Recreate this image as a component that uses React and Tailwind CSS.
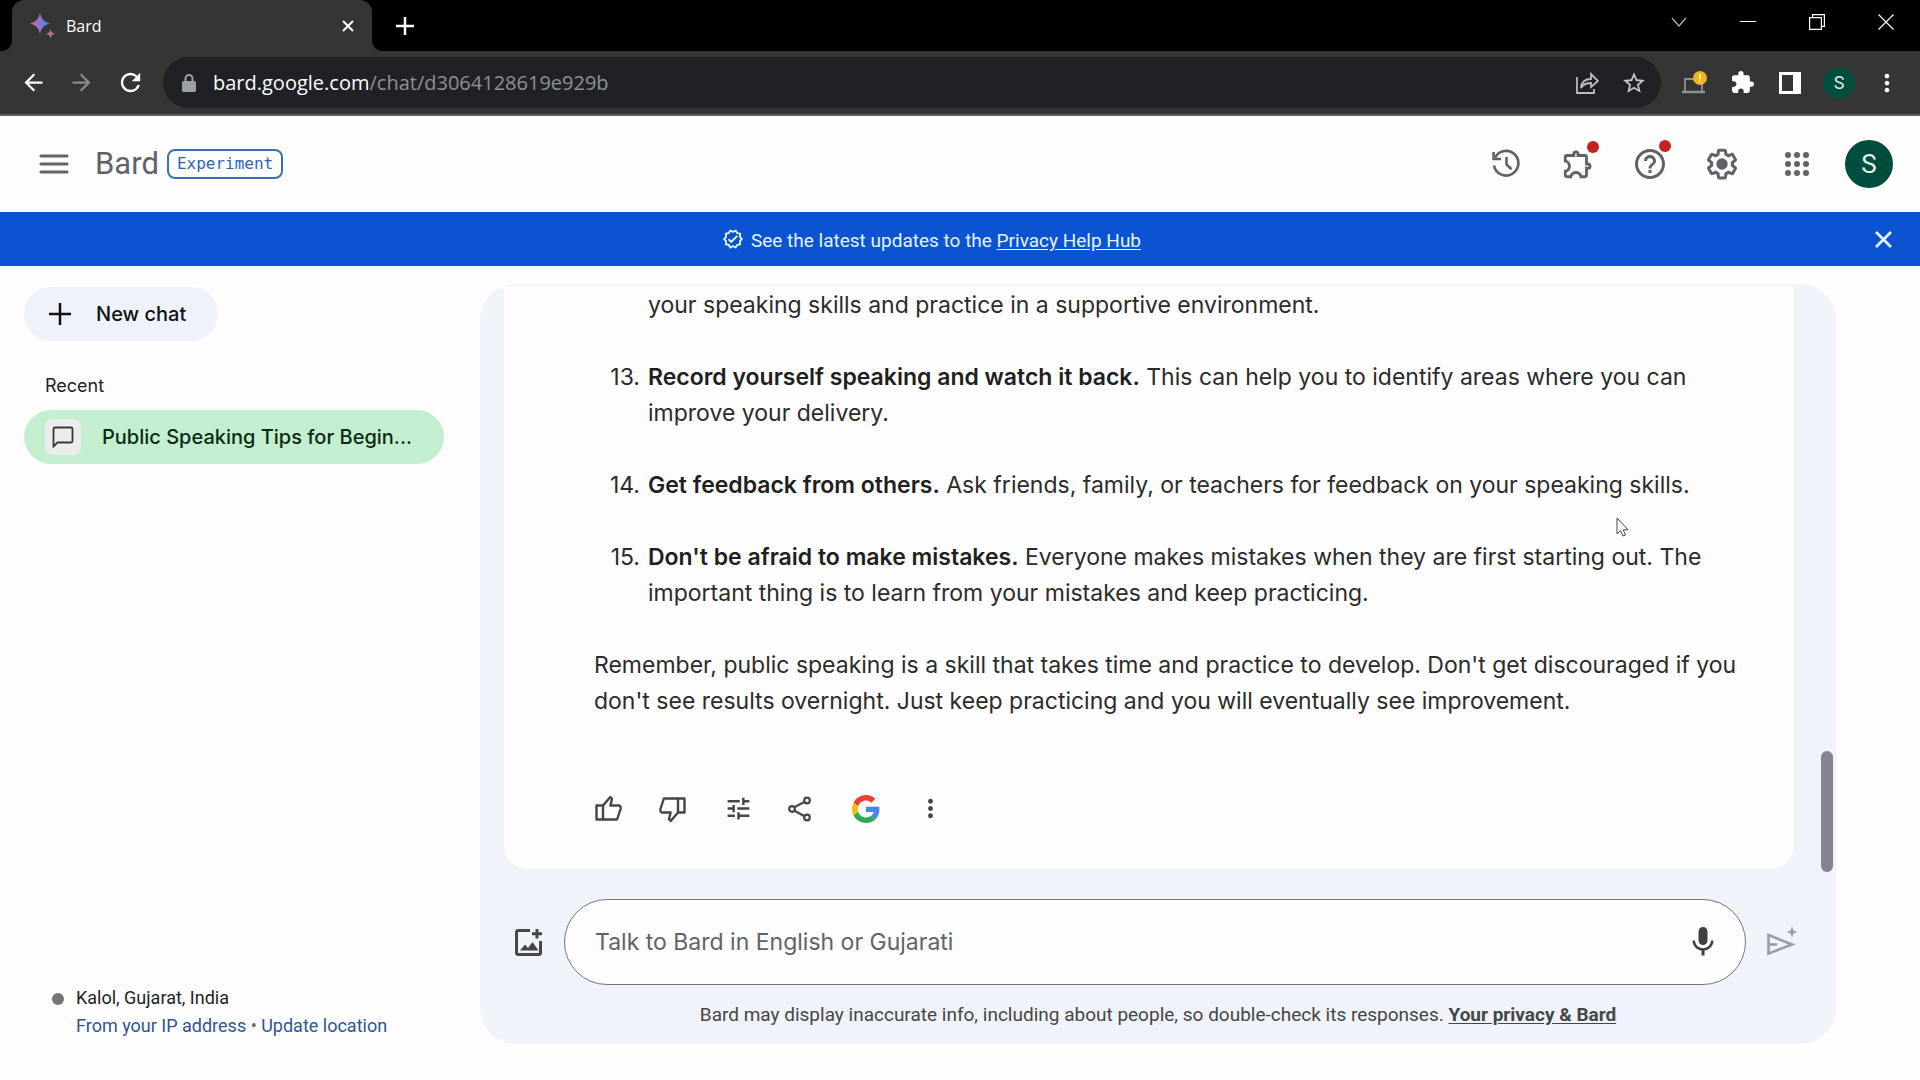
import {
  MdArrowBack,
  MdArrowForward,
  MdExtension,
  MdHelpOutline,
  MdMic,
  MdMoreVert,
  MdOutlineExtension,
  MdRefresh,
  MdStarBorder,
  MdTune,
} from "react-icons/md";

const tips = [
  {
    number: 13,
    title: "Record yourself speaking and watch it back.",
    text: "This can help you to identify areas where you can improve your delivery.",
  },
  {
    number: 14,
    title: "Get feedback from others.",
    text: "Ask friends, family, or teachers for feedback on your speaking skills.",
  },
  {
    number: 15,
    title: "Don't be afraid to make mistakes.",
    text: "Everyone makes mistakes when they are first starting out. The important thing is to learn from your mistakes and keep practicing.",
  },
];

function BardIcon() {
  return (
    <svg width="26" height="26" viewBox="0 0 26 26" aria-hidden="true">
      <defs>
        <linearGradient id="spark" x1="0" y1="0" x2="1" y2="0">
          <stop offset="0" stopColor="#d96570" />
          <stop offset="0.45" stopColor="#9b72cb" />
          <stop offset="1" stopColor="#1b90f0" />
        </linearGradient>
      </defs>
      <path
        fill="url(#spark)"
        d="M10 0c1.4 6 4 8.800 10 10.500-6 1.700-8.600 4.500-10 10.500C8.600 15 6 12.200 0 10.500 6 8.800 8.600 6 10 0Z"
      />
      <path
        fill="#b5708f"
        d="M20.500 16c.7 3 1.700 4 4.500 4.700-2.800.8-3.800 1.800-4.500 4.800-.7-3-1.700-4-4.500-4.800 2.800-.7 3.800-1.700 4.500-4.700Z"
      />
    </svg>
  );
}

function ThumbIcon({ className }) {
  return (
    <svg
      className={className}
      width="28"
      height="28"
      viewBox="0 0 28 28"
      fill="none"
      stroke="currentColor"
      strokeWidth="2.400"
      strokeLinejoin="round"
      aria-hidden="true"
    >
      <path d="M2.500 10.500H9v14H2.500z" />
      <path d="M9 10.500l7.300-8.500 1.700 1.800-1.600 6.700h8.800q1.800.5 1.500 3l-3.600 11H9" />
    </svg>
  );
}

function GoogleIcon() {
  return (
    <svg width="28" height="28" viewBox="0 0 48 48" aria-hidden="true">
      <path fill="#EA4335" d="M24 9.500c3.540 0 6.710 1.220 9.210 3.600l6.850-6.850C35.900 2.380 30.470 0 24 0 14.620 0 6.510 5.380 2.560 13.220l7.980 6.190C12.430 13.720 17.740 9.500 24 9.500z" />
      <path fill="#4285F4" d="M46.980 24.550c0-1.570-.15-3.090-.38-4.550H24v9.020h12.940c-.58 2.960-2.260 5.480-4.780 7.180l7.730 6c4.510-4.180 7.090-10.360 7.090-17.650z" />
      <path fill="#FBBC05" d="M10.530 28.590c-.48-1.450-.76-2.990-.76-4.590s.27-3.140.76-4.590l-7.980-6.190C.92 16.460 0 20.120 0 24c0 3.880.92 7.540 2.560 10.780l7.970-6.190z" />
      <path fill="#34A853" d="M24 48c6.480 0 11.930-2.130 15.890-5.810l-7.730-6c-2.150 1.450-4.920 2.300-8.160 2.300-6.260 0-11.570-4.220-13.470-9.910l-7.980 6.190C6.510 42.620 14.620 48 24 48z" />
    </svg>
  );
}

function AppsIcon() {
  return (
    <svg width="24" height="24" viewBox="0 0 24 24" fill="currentColor" aria-hidden="true">
      {[3, 12, 21].map((y) =>
        [3, 12, 21].map((x) => <circle key={`${x}-${y}`} cx={x} cy={y} r="3" />)
      )}
    </svg>
  );
}

function TitleBar() {
  return (
    <div className="flex h-[51px] items-stretch justify-between bg-black pl-3 text-white">
      <div className="flex items-center">
        <div className="relative flex h-full w-[360px] items-center justify-between rounded-t-xl bg-[#353535] pr-[14px] pl-[18px]">
          <div className="flex items-center gap-[10px]">
            <BardIcon />
            <span className="font-['Open_Sans',sans-serif] text-base">Bard</span>
          </div>
          <button aria-label="Close tab" className="p-1">
            <svg width="12" height="12" viewBox="0 0 12 12" stroke="currentColor" strokeWidth="2">
              <path d="M1 1l10 10M11 1L1 11" />
            </svg>
          </button>
          <svg className="absolute bottom-0 left-full" width="10" height="10" viewBox="0 0 10 10">
            <path fill="#353535" d="M0 0v10h10A10 10 0 0 1 0 0Z" />
          </svg>
          <svg className="absolute right-full bottom-0" width="10" height="10" viewBox="0 0 10 10">
            <path fill="#353535" d="M10 0v10H0A10 10 0 0 0 10 0Z" />
          </svg>
        </div>
        <button aria-label="New tab" className="ml-6">
          <svg width="18" height="18" viewBox="0 0 18 18" stroke="currentColor" strokeWidth="2.500">
            <path d="M9 0v18M0 9h18" />
          </svg>
        </button>
      </div>

      <div className="flex h-11 items-center">
        <button aria-label="Search tabs" className="flex w-[68px] justify-center">
          <svg width="16" height="10" viewBox="0 0 16 10" fill="none" stroke="#b4b4b4" strokeWidth="1.200">
            <path d="M1 1l7 8 7-8" />
          </svg>
        </button>
        <button aria-label="Minimize" className="flex w-[69px] justify-center">
          <svg width="16" height="16" viewBox="0 0 16 16" fill="none" stroke="currentColor">
            <path d="M0 7.500h16" />
          </svg>
        </button>
        <button aria-label="Restore" className="flex w-[69px] justify-center">
          <svg width="16" height="16" viewBox="0 0 16 16" fill="none" stroke="currentColor" strokeWidth="1.200">
            <path d="M.6 3.600h11.800v11.800H.6zM3.600 3.600V.6h11.800v11.800h-3" />
          </svg>
        </button>
        <button aria-label="Close window" className="flex w-[69px] justify-center">
          <svg width="16" height="16" viewBox="0 0 16 16" fill="none" stroke="currentColor" strokeWidth="1.200">
            <path d="M.5.5l15 15M15.500.5l-15 15" />
          </svg>
        </button>
      </div>
    </div>
  );
}

function Toolbar() {
  return (
    <div className="flex h-[65px] items-center border-b-2 border-[#5f5f5f] bg-[#353535] pr-[19px] pl-5 text-white">
      <div className="flex items-center gap-[21px]">
        <button aria-label="Back">
          <MdArrowBack size={27} />
        </button>
        <button aria-label="Forward" className="text-[#8a8a8a]">
          <MdArrowForward size={27} />
        </button>
        <button aria-label="Reload">
          <MdRefresh size={29} />
        </button>
      </div>

      <div className="ml-[18px] flex h-[51px] flex-1 items-center rounded-full bg-[#202124] pr-[14px] pl-[19px]">
        <svg width="14" height="18" viewBox="0 0 14 18" aria-hidden="true">
          <path d="M3.500 8V4.500a3.500 3.500 0 0 1 7 0V8" fill="none" stroke="#9aa0a6" strokeWidth="2" />
          <rect y="7" width="14" height="11" rx="1.500" fill="#9aa0a6" />
        </svg>
        <div
          role="textbox"
          aria-label="Address"
          className="ml-[17px] flex-1 font-['Open_Sans',sans-serif] text-xl text-[#8e9196]"
        >
          <span className="text-white">bard.google.com</span>/chat/d3064128619e929b
        </div>
        <button aria-label="Share this page" className="mr-[22px] text-[#b8bbbf]">
          <svg width="24" height="24" viewBox="0 0 24 24" fill="none" stroke="currentColor" strokeWidth="1.800">
            <path d="M2 6v16h17v-4" />
            <path d="M6 17c.5-6 4-9 10-9V3l7 7-7 6v-4c-5 0-8 1.500-10 5Z" />
          </svg>
        </button>
        <button aria-label="Bookmark" className="text-[#c4c7ca]">
          <MdStarBorder size={26} />
        </button>
      </div>

      <div className="ml-[19px] flex items-center">
        <button aria-label="Device status" className="flex w-[28px] justify-center">
          <svg width="28" height="26" viewBox="0 0 28 26">
            <path d="M5 21V9h17v12" fill="none" stroke="#8f8f8f" strokeWidth="1.800" />
            <path d="M2 22h23" stroke="#8f8f8f" strokeWidth="2.500" />
            <circle cx="20" cy="8" r="7" fill="#f2b41c" />
            <path d="M20 4v5M20 10.500v2" stroke="#fff3c4" strokeWidth="2" />
          </svg>
        </button>
        <button aria-label="Extensions" className="ml-5 flex w-[28px] justify-center">
          <MdExtension size={25} />
        </button>
        <button aria-label="Side panel" className="ml-[20px] flex w-[28px] justify-center">
          <svg width="22" height="22" viewBox="0 0 22 22">
            <path fillRule="evenodd" fill="currentColor" d="M0 0h22v22H0zM3 3v16h11V3z" />
          </svg>
        </button>
        <button
          aria-label="Profile"
          className="ml-[19px] flex size-8 items-center justify-center rounded-full bg-[#004d3d] font-['Roboto',sans-serif] text-lg text-[#d4efe6]"
        >
          S
        </button>
        <button aria-label="Browser menu" className="ml-[18px]">
          <MdMoreVert size={28} />
        </button>
      </div>
    </div>
  );
}

function Header() {
  return (
    <header className="flex h-24 items-center justify-between pr-[27px] pl-[38px] text-[#5f6368]">
      <div className="flex items-center">
        <button aria-label="Main menu">
          <svg width="32" height="32" viewBox="0 0 32 32" stroke="currentColor" strokeWidth="3" strokeLinecap="round">
            <path d="M3 8h26M3 16h26M3 24h26" />
          </svg>
        </button>
        <span className="ml-[25px] font-['Roboto',sans-serif] text-[31px]">Bard</span>
        <span className="ml-2 rounded-lg border-2 border-[#3d6fb5] px-2 font-['DejaVu_Sans_Mono',monospace] text-base leading-[26px] text-[#2f66b5]">
          Experiment
        </span>
      </div>

      <div className="flex items-center">
        <button aria-label="Activity" className="flex w-[72px] justify-center">
          <svg width="30" height="30" viewBox="0 0 30 30" fill="none" stroke="currentColor" strokeWidth="2.600">
            <path d="M4.200 8.500A12.300 12.300 0 1 1 3 16.500" />
            <path d="M2.600 3v7h7.400" />
            <path d="M15.500 8v7.500l5 4.800" />
          </svg>
        </button>
        <button aria-label="Extensions" className="relative flex w-[72px] justify-center">
          <MdOutlineExtension size={34} />
          <span className="absolute -top-1.5 right-[15px] size-3 rounded-full bg-[#c5221f]" />
        </button>
        <button aria-label="Help" className="relative flex w-[72px] justify-center">
          <MdHelpOutline size={36} />
          <span className="absolute -top-1.5 right-[15px] size-3 rounded-full bg-[#c5221f]" />
        </button>
        <button aria-label="Settings" className="flex w-[72px] justify-center">
          <svg width="36" height="36" viewBox="0 0 24 24" fill="currentColor">
            <path d="M13.850 22.250h-3.700c-.74 0-1.360-.54-1.450-1.270l-.27-1.890c-.27-.14-.53-.29-.79-.46l-1.800.72c-.7.26-1.470-.03-1.810-.65L2.200 15.530c-.35-.66-.2-1.440.36-1.880l1.530-1.190c-.01-.15-.02-.3-.02-.46 0-.15.010-.31.020-.46l-1.520-1.190c-.59-.45-.74-1.260-.37-1.880l1.850-3.190c.34-.62 1.110-.9 1.790-.63l1.810.73c.26-.17.520-.32.780-.46l.27-1.910c.09-.7.710-1.250 1.440-1.250h3.700c.74 0 1.360.54 1.450 1.270l.27 1.890c.27.14.530.29.790.46l1.800-.72c.71-.26 1.480.030 1.820.65l1.840 3.180c.36.66.2 1.440-.36 1.880l-1.520 1.190c.01.15.020.3.020.460s-.01.310-.02.460l1.520 1.190c.56.450.720 1.230.370 1.860l-1.860 3.220c-.34.620-1.110.9-1.800.63l-1.800-.72c-.26.170-.52.320-.78.460l-.27 1.910c-.1.680-.72 1.220-1.460 1.220zm-3.230-2h2.760l.37-2.550.53-.22c.44-.18.880-.44 1.340-.78l.45-.34 2.380.96 1.380-2.400-2.030-1.580.07-.56c.03-.26.060-.51.060-.78s-.03-.53-.06-.78l-.07-.56 2.030-1.580-1.390-2.400-2.390.96-.45-.35c-.42-.32-.87-.58-1.330-.77l-.52-.22-.37-2.550h-2.760l-.37 2.550-.53.210c-.44.190-.88.440-1.340.79l-.45.330-2.380-.95-1.390 2.390 2.030 1.580-.07.560a7 7 0 0 0-.06.790c0 .26.020.53.060.78l.07.560-2.030 1.580 1.380 2.400 2.390-.96.450.350c.43.330.860.580 1.330.77l.53.220z" />
            <circle cx="12" cy="12" r="3.800" />
          </svg>
        </button>
        <button aria-label="Google apps" className="ml-[21px] flex w-9 justify-center">
          <AppsIcon />
        </button>
        <button
          aria-label="Account"
          className="ml-[30px] flex size-12 items-center justify-center rounded-full bg-[#004d3d] font-['Roboto',sans-serif] text-[26px] text-[#e3f5ef]"
        >
          S
        </button>
      </div>
    </header>
  );
}

function Banner() {
  return (
    <div className="flex h-[54px] items-center bg-[#0b53d0] pr-6 text-[#e3f4ff]">
      <p className="flex flex-1 items-center justify-center gap-[7px] pt-1 pr-2 font-['Roboto',sans-serif] text-[19px] leading-6">
        <svg className="mb-1" width="22" height="22" viewBox="0 0 24 24" fill="currentColor">
          <path d="M23 11.990l-2.440-2.790.34-3.690-3.610-.82L15.400 1.500 12 2.960 8.600 1.500 6.710 4.690 3.100 5.500l.34 3.700L1 11.990l2.440 2.790-.34 3.700 3.610.82L8.600 22.500l3.400-1.470 3.400 1.460 1.890-3.190 3.610-.82-.34-3.690 2.440-2.800zm-3.950 1.480l-.56.650.08.850.18 1.950-1.900.43-.84.190-.44.740-.99 1.680-1.780-.77-.8-.34-.79.340-1.780.77-.99-1.670-.44-.74-.84-.19-1.900-.43.180-1.960.08-.85-.56-.65L3.670 12l1.290-1.480.56-.65-.09-.86-.18-1.940 1.900-.43.840-.19.440-.74.990-1.680 1.780.77.800.34.790-.34 1.780-.77.990 1.680.44.740.84.190 1.900.43-.18 1.950-.08.850.56.650 1.290 1.470-1.280 1.480z" />
          <path d="M10.090 13.750l-2.320-2.330-1.480 1.490 3.800 3.810 7.340-7.360-1.480-1.490z" />
        </svg>
        <span>
          See the latest updates to the{" "}
          <a href="#privacy" className="underline underline-offset-2">
            Privacy Help Hub
          </a>
        </span>
      </p>
      <button aria-label="Dismiss" className="p-1">
        <svg width="17" height="17" viewBox="0 0 17 17" stroke="currentColor" strokeWidth="2.800">
          <path d="M1 1l15 15M16 1L1 16" />
        </svg>
      </button>
    </div>
  );
}

function Sidebar() {
  return (
    <aside className="flex w-[480px] shrink-0 flex-col items-start px-6 pt-[21px] pb-10">
      <button className="flex h-[54px] items-center gap-6 rounded-full bg-[#eff2fa] pr-8 pl-6 text-xl font-medium text-[#111]">
        <svg width="24" height="24" viewBox="0 0 24 24" stroke="currentColor" strokeWidth="2.500">
          <path d="M12 1v22M1 12h22" />
        </svg>
        New chat
      </button>

      <h2 className="mt-[33px] ml-[21px] text-lg leading-6 text-[#1f1f1f]">Recent</h2>
      <a
        href="#chat"
        className="mt-3 flex h-[54px] w-[420px] items-center rounded-full bg-[#c4eed0] pl-[21px] text-xl font-medium text-[#0b2a14]"
      >
        <span className="flex size-9 items-center justify-center rounded-lg bg-[#ececec]">
          <svg width="22" height="22" viewBox="0 0 22 22" fill="none" stroke="#3c3638" strokeWidth="1.800">
            <path d="M1.500 20.500V3q0-1.500 1.500-1.500h16q1.500 0 1.500 1.500v12q0 1.500-1.500 1.500H5.500z" />
          </svg>
        </span>
        <span className="ml-[21px]">Public Speaking Tips for Begin...</span>
      </a>

      <div className="mt-auto flex gap-3 pl-7 font-['Roboto',sans-serif] text-lg leading-7 text-[#1f1f1f]">
        <span className="mt-[9px] size-3 rounded-full bg-[#757575]" />
        <div>
          <p>Kalol, Gujarat, India</p>
          <p className="text-[#2f5594]">
            <a href="#ip">From your IP address</a>
            <span className="text-[#6b6b6b]"> • </span>
            <a href="#location">Update location</a>
          </p>
        </div>
      </div>
    </aside>
  );
}

function Answer() {
  return (
    <article className="mr-[42px] ml-6 flex flex-1 flex-col rounded-b-3xl bg-[#fdfdfd] pt-px pr-10 pl-[90px] text-[23px] leading-9 text-[#2b2b2b]">
      <ol className="flex flex-col gap-9">
        <li className="pl-[54px]">
          your speaking skills and practice in a supportive environment.
        </li>
        {tips.map((tip) => (
          <li key={tip.number} className="flex gap-2">
            <span className="w-[46px] shrink-0 text-right">{tip.number}.</span>
            <p>
              <strong className="font-semibold text-[#1f1f1f]">{tip.title}</strong> {tip.text}
            </p>
          </li>
        ))}
      </ol>
      <p className="mt-9">
        Remember, public speaking is a skill that takes time and practice to develop. Don't get
        discouraged if you don't see results overnight. Just keep practicing and you will
        eventually see improvement.
      </p>
      <div className="mt-auto mb-[46px] flex h-[29px] items-center text-[#444746]">
        <button aria-label="Good response" className="w-[65px]">
          <ThumbIcon />
        </button>
        <button aria-label="Bad response" className="w-[65px]">
          <ThumbIcon className="rotate-180" />
        </button>
        <button aria-label="Modify response" className="w-16">
          <MdTune size={29} />
        </button>
        <button aria-label="Share" className="w-16">
          <svg width="24" height="26" viewBox="0 0 24 26" fill="none" stroke="currentColor" strokeWidth="2.200">
            <path d="M6 11.500L17 5.500M6 14.500l11 6" />
            <circle cx="19" cy="4.500" r="2.800" />
            <circle cx="4" cy="13" r="2.800" />
            <circle cx="19" cy="21.500" r="2.800" />
          </svg>
        </button>
        <button aria-label="Search related topics" className="mr-9">
          <GoogleIcon />
        </button>
        <button aria-label="More">
          <MdMoreVert size={29} />
        </button>
      </div>
    </article>
  );
}

function Composer() {
  return (
    <form className="flex items-center pt-[30px] pr-[38px] pl-8">
      <button type="button" aria-label="Upload image" className="text-[#444746]">
        <svg width="32" height="32" viewBox="0 0 32 32" fill="none" stroke="currentColor" strokeWidth="3">
          <path d="M18 4.500H6.500Q4.500 4.500 4.500 6.500v20q0 2 2 2h20q2 0 2-2V15" />
          <path d="M25 3v9.500M20 7.800h10" />
          <path d="M8 24.500l5-6 3 3.500 4.500-6 6 8.500z" fill="currentColor" stroke="none" />
        </svg>
      </button>
      <div className="ml-5 flex h-[86px] flex-1 items-center rounded-full border border-[#747775] bg-[#fdfdfd] pr-6 pl-[30px]">
        <input
          id="prompt"
          type="text"
          aria-label="Prompt"
          placeholder="Talk to Bard in English or Gujarati"
          className="h-9 min-w-0 flex-1 bg-transparent text-[23px] outline-none placeholder:text-[#5f6368]"
        />
        <button type="button" aria-label="Use microphone" className="text-[#3c4043]">
          <MdMic size={36} />
        </button>
      </div>
      <button aria-label="Send" className="ml-5 text-[#9a9ca6]">
        <svg width="32" height="32" viewBox="0 0 32 32" fill="none" stroke="currentColor" strokeWidth="2.600">
          <path d="M2.500 9v18.500L26 18.500z" />
          <path d="M3 18.500h8" />
          <path d="M26 .5l1.500 4 4 1.500-4 1.500-1.500 4-1.500-4-4-1.500 4-1.500z" fill="currentColor" stroke="none" />
        </svg>
      </button>
    </form>
  );
}

export default function App() {
  return (
    <div className="flex min-h-screen flex-col bg-[#fdfdfd] font-['Inter',sans-serif]">
      <TitleBar />
      <Toolbar />
      <Header />
      <Banner />

      <div className="flex flex-1">
        <Sidebar />
        <main className="relative mt-[18px] mr-21 mb-9 flex flex-1 flex-col rounded-[36px] bg-[#f0f3fa] pt-0.5">
          <Answer />
          <Composer />
          <p className="mt-4 mb-[15px] text-center font-['Roboto',sans-serif] text-[19px] leading-7 text-[#444746]">
            Bard may display inaccurate info, including about people, so double-check its
            responses.{" "}
            <a href="#your-privacy" className="font-bold underline underline-offset-2">
              Your privacy &amp; Bard
            </a>
          </p>
          <div className="absolute right-[3px] bottom-[172px] h-[121px] w-3 rounded-full bg-[#83848f]" />
        </main>
      </div>

      <svg
        className="absolute top-[517px] left-[1616px]"
        width="13"
        height="20"
        viewBox="0 0 13 20"
        fill="#fff"
        stroke="#444"
      >
        <path d="M1 1v16l3.500-3.500L7 19l2.500-1-2.300-5.200H12z" />
      </svg>
    </div>
  );
}
